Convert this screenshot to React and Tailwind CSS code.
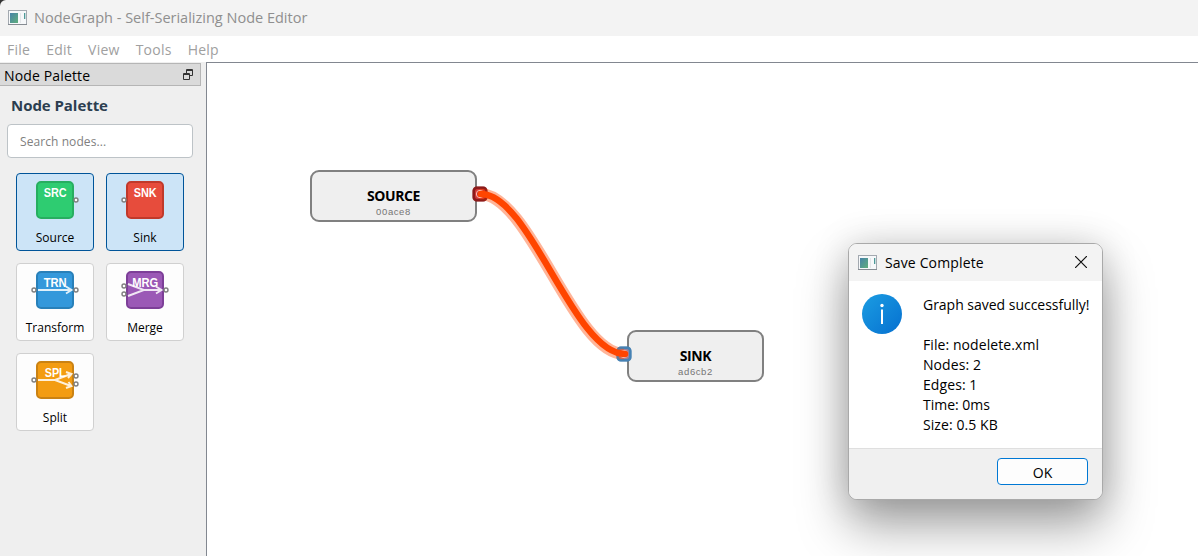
import React from "react";

function WindowIcon({ id }) {
  return (
    <svg className="block h-4 w-[19px] shrink-0" viewBox="0 0 19 16">
      <defs>
        <linearGradient id={id} x1="0" y1="0" x2="1" y2="1">
          <stop offset="0" stopColor="#4682a8" />
          <stop offset="1" stopColor="#5fae7c" />
        </linearGradient>
      </defs>
      <rect x="0.5" y="0.5" width="18" height="14" fill="#f6f8fa" stroke="#a3a9b0" />
      <path d="M0 14.5h19" stroke="#858b92" strokeWidth="1" />
      <rect x="2" y="3" width="8" height="10" fill={`url(#${id})`} />
      <path d="M12.5 3v10" stroke="#e3e6e9" />
      <rect x="16" y="3" width="1.3" height="6" fill="#4d9a98" />
    </svg>
  );
}

const Port = ({ x, y }) => (
  <circle cx={x} cy={y} r="2" fill="#fff" stroke="#7f7f7f" strokeWidth="1.4" />
);

const palette = [
  { name: "Source", code: "SRC", width: 23, fill: "#2ecc71", stroke: "#27ae60", selected: true, ports: [[59, 26]] },
  { name: "Sink", code: "SNK", width: 23, fill: "#e74c3c", stroke: "#c0392b", selected: true, ports: [[17, 26]] },
  { name: "Transform", code: "TRN", width: 23, fill: "#3498db", stroke: "#2980b9", ports: [[17, 26], [59, 26]], arrow: "M21 26H54M49 22.5L54.5 26L49 29.5" },
  { name: "Merge", code: "MRG", width: 26, fill: "#9b59b6", stroke: "#7d3f98", ports: [[17, 22], [17, 30], [59, 26]], arrow: "M21 20L37 26L21 32M37 26H54M49 22.5L54.5 26L49 29.5" },
  { name: "Split", code: "SPL", width: 21, fill: "#f39c12", stroke: "#ca8213", ports: [[17, 26], [59, 22], [59, 30]], arrow: "M21 26H38L54 20M38 26L54 32M49 18L54.5 20L51 24M51.5 28L54.5 32L49 34" },
];

function PaletteItem({ item }) {
  return (
    <div className={`flex h-[78px] w-[78px] flex-col items-center rounded-[4px] border ${item.selected ? "border-[#005499] bg-[#cce4f7]" : "border-[#d0d0d0] bg-[#fdfdfd]"}`}>
      <svg className="block h-[52px] w-[76px] shrink-0" viewBox="0 0 76 52">
        <rect x="20" y="8" width="36" height="36" rx="4" fill={item.fill} stroke={item.stroke} strokeWidth="2" />
        <text x="38.2" y="23" textAnchor="middle" fontFamily="Liberation Sans, sans-serif" fontWeight="700" fontSize="12.5" textLength={item.width} lengthAdjust="spacingAndGlyphs" fill="#fff">{item.code}</text>
        {item.arrow && <path d={item.arrow} fill="none" stroke="#fff" strokeOpacity="0.85" strokeWidth="1.9" />}
        {item.ports.map(([x, y]) => <Port key={`${x}-${y}`} x={x} y={y} />)}
      </svg>
      <span className="text-[12px] leading-[24px] text-black">{item.name}</span>
    </div>
  );
}

function GraphNode({ className, title, id }) {
  return (
    <div className={`absolute flex h-[52px] flex-col items-center rounded-[9px] border-2 border-[#808080] bg-[#efefef] pt-4 ${className}`}>
      <span className="font-['Open_Sans',sans-serif] text-[14px] leading-[16px] font-bold tracking-[-0.4px] text-black">{title}</span>
      <span className="mt-0.5 font-['Liberation_Sans',sans-serif] text-[9.5px] leading-3 tracking-[0.6px] text-[#757575]">{id}</span>
    </div>
  );
}

function SaveDialog() {
  return (
    <div className="absolute top-[180px] left-[641px] flex h-[257px] w-[255px] flex-col overflow-hidden rounded-[9px] border border-[#a9a9a9] bg-white shadow-[0_26px_50px_rgba(0,0,0,0.36),0_0_36px_rgba(0,0,0,0.15)]">
      <div className="flex h-[37px] shrink-0 items-center bg-[#f3f3f3] pl-[9px]">
        <WindowIcon id="dialog-icon" />
        <span className="ml-2 text-[14px] tracking-[0.14px] text-black">Save Complete</span>
        <svg className="mr-[15px] mb-0.5 ml-auto block h-3 w-3" viewBox="0 0 12 12">
          <path d="M0 0L12 12M12 0L0 12" stroke="#111" strokeWidth="1.2" />
        </svg>
      </div>
      <div className="flex flex-1 pt-[13px] pl-[13px]">
        <svg className="block h-10 w-10 shrink-0" viewBox="0 0 40 40">
          <defs>
            <linearGradient id="info" x1="0" y1="0" x2="1" y2="1">
              <stop offset="0" stopColor="#1b9de2" />
              <stop offset="1" stopColor="#0670d0" />
            </linearGradient>
          </defs>
          <circle cx="20" cy="20" r="20" fill="url(#info)" />
          <circle cx="20" cy="11.5" r="1.7" fill="#fff" />
          <path d="M20 15.5V30" stroke="#fff" strokeWidth="2" />
        </svg>
        <div className="mt-px ml-[21px] text-[14px] leading-5 tracking-[-0.02px] whitespace-nowrap text-black">
          <p>Graph saved successfully!</p>
          <p className="h-5" />
          <p className="tracking-[0.08px]">File: nodelete.xml</p>
          <p className="tracking-[0.08px]">Nodes: 2</p>
          <p className="tracking-[0.08px]">Edges: 1</p>
          <p>Time: 0ms</p>
          <p className="tracking-[0.08px]">Size: 0.5 KB</p>
        </div>
      </div>
      <div className="flex h-[51px] shrink-0 justify-end border-t border-[#dfdfdf] bg-[#f0f0f0] pt-[9px] pr-[14px]">
        <button className="h-[27px] w-[91px] rounded-[4px] border border-[#0078d4] bg-[#fdfdfd] pt-0.5 text-[14px] text-black">OK</button>
      </div>
    </div>
  );
}

export default function App() {
  return (
    <div className="flex h-[556px] w-[1198px] flex-col overflow-hidden bg-[#efefef] font-['Open_Sans','Noto_Sans',sans-serif]">
      <div className="shrink-0 bg-[#333]">
        <header className="flex h-9 items-center rounded-tl-[6px] bg-[#f3f3f3] pl-2">
          <WindowIcon id="app-icon" />
          <h1 className="ml-[7px] text-[14.5px] text-[#8f8f8f]">NodeGraph - Self-Serializing Node Editor</h1>
        </header>
      </div>
      <nav className="flex h-[26px] shrink-0 items-center gap-4 bg-white pl-[7px] text-[14px] tracking-[0.25px] text-[#a0a0a0]">
        <span>File</span><span>Edit</span><span>View</span><span>Tools</span><span>Help</span>
      </nav>
      <div className="flex min-h-0 flex-1">
        <aside className="w-[206px] shrink-0 pt-px">
          <div className="flex h-[23px] w-[201px] items-center border border-l-0 border-[#b5b5b5] bg-[#dadada] pl-1">
            <span className="pt-0.5 text-[14px] tracking-[0.15px] text-black">Node Palette</span>
            <svg className="mr-[7px] ml-auto block h-[11px] w-[10px]" viewBox="0 0 10 11" fill="none" stroke="#333">
              <path d="M3.5 4V0.5H9.5V6.5H7M3.5 1.5H9.5" />
              <path d="M0.5 4.5H6.5V10.5H0.5ZM0.5 5.5H6.5" />
            </svg>
          </div>
          <h2 className="mt-[9px] ml-[11px] text-[15px] leading-5 font-bold tracking-[-0.05px] text-[#2c3e50]">Node Palette</h2>
          <input className="mt-[9px] ml-[7px] block h-[34px] w-[186px] rounded-[4px] border border-[#bdc3c7] bg-white px-3 text-[12px] tracking-[0.08px] placeholder:text-[#808080]" placeholder="Search nodes..." />
          <div className="mt-[15px] ml-4 grid w-[168px] grid-cols-2 gap-3">
            {palette.map((item) => <PaletteItem key={item.name} item={item} />)}
          </div>
        </aside>
        <main className="relative min-w-0 flex-1 border-t border-l border-[#828790] bg-white">
          <GraphNode className="top-[107px] left-[103px] w-[167px]" title="SOURCE" id="00ace8" />
          <GraphNode className="top-[267px] left-[420px] w-[137px]" title="SINK" id="ad6cb2" />
          <svg className="absolute top-[117px] left-[263px] h-[190px] w-[170px]" viewBox="470 180 170 190" fill="none">
            <rect x="473.75" y="187.75" width="12.5" height="12.5" rx="3" fill="#cc3535" stroke="#8b1a1a" strokeWidth="2.5" />
            <rect x="617.75" y="347.75" width="12.5" height="12.5" rx="3" fill="#a08098" stroke="#4682b4" strokeWidth="2.5" />
            <path d="M480 194C530 194 574 354 624 354" stroke="#ff4500" strokeOpacity="0.4" strokeWidth="12" />
            <rect x="473.75" y="187.75" width="12.5" height="12.5" rx="3" stroke="#8b1a1a" strokeOpacity="0.5" strokeWidth="2.5" />
            <rect x="617.75" y="347.75" width="12.5" height="12.5" rx="3" stroke="#4682b4" strokeOpacity="0.7" strokeWidth="2.5" />
            <circle cx="480" cy="194" r="3.7" stroke="#ffc1b0" />
            <circle cx="624" cy="354" r="3.7" stroke="#ffc1b0" />
            <path d="M481 194C530 194 574 354 625 354" stroke="#ff4500" strokeWidth="6.5" strokeLinecap="round" />
          </svg>
          <SaveDialog />
        </main>
      </div>
    </div>
  );
}
